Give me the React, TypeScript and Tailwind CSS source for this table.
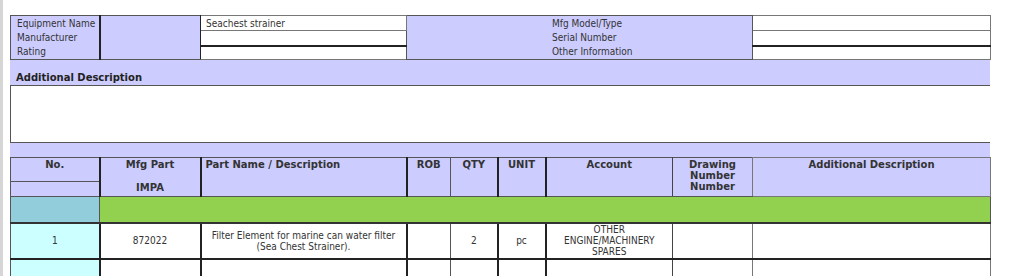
import React from "react";

const lav = "bg-[#ccccff]";
const regular = "font-['DejaVu_Sans_Condensed','DejaVu_Sans',sans-serif] text-[10px]";
const bold = "font-['DejaVu_Sans',sans-serif] text-[10px] font-bold";

const columns = [
  { key: "no", w: "w-[89px]" },
  { key: "mfg", w: "w-[101px]" },
  { key: "name", w: "w-[206px]" },
  { key: "rob", w: "w-[44px]" },
  { key: "qty", w: "w-[47px]" },
  { key: "unit", w: "w-[48px]" },
  { key: "account", w: "w-[127px]" },
  { key: "drawing", w: "w-[80px]" },
  { key: "desc", w: "w-[238px]" },
];

const EquipmentInfo = () => (
  <table className={`w-[980px] table-fixed border-collapse ${regular} leading-[14px] text-[#333]`}>
    <colgroup>
      <col className="w-[89px]" />
      <col className="w-[101px]" />
      <col className="w-[206px]" />
      <col className="w-[346px]" />
      <col className="w-[238px]" />
    </colgroup>
    <tbody>
      <tr className="h-[14px]">
        <td rowSpan={3} className={`${lav} border border-[#555] border-r-2 border-r-[#222] px-[6px] pt-[1px] align-top whitespace-nowrap`}>
          <div>Equipment Name</div>
          <div>Manufacturer</div>
          <div>Rating</div>
        </td>
        <td rowSpan={3} className={`${lav} border-y border-y-[#555] border-r border-r-[#222]`} />
        <td className="border border-[#777] bg-white px-[5px] leading-[13px]">Seachest strainer</td>
        <td rowSpan={3} className={`${lav} border border-[#555] pl-[145px] pt-[1px] align-top whitespace-nowrap`}>
          <div>Mfg Model/Type</div>
          <div>Serial Number</div>
          <div>Other Information</div>
        </td>
        <td className="border border-[#777] bg-white" />
      </tr>
      <tr className="h-[14px]">
        <td className="border border-[#777] border-b-2 border-b-[#222] bg-white" />
        <td className="border border-[#777] border-b-2 border-b-[#222] bg-white" />
      </tr>
      <tr className="h-[13px]">
        <td className="border border-[#777] bg-white" />
        <td className="border border-[#777] bg-white" />
      </tr>
    </tbody>
  </table>
);

const head = `${lav} text-center align-top pt-[1px]`;

const PartsHeader = () => (
  <table className={`w-[980px] table-fixed border-collapse ${bold} leading-[11px] text-[#333]`}>
    <colgroup>
      {columns.map((c) => (
        <col key={c.key} className={c.w} />
      ))}
    </colgroup>
    <tbody>
      <tr className="h-[24px]">
        <td className={`${head} border border-[#555]`}>No.</td>
        <td rowSpan={2} className={`${head} border-y border-y-[#555] border-x-2 border-x-[#222]`}>
          <div>Mfg Part</div>
          <div className="mt-[12px]">IMPA</div>
        </td>
        <td rowSpan={2} className={`${lav} border-y border-y-[#555] border-r-2 border-r-[#222] px-[4px] pt-[1px] align-top`}>
          Part Name / Description
        </td>
        <td rowSpan={2} className={`${head} border-y border-y-[#555] border-r border-r-[#555]`}>ROB</td>
        <td rowSpan={2} className={`${head} border-y border-y-[#555] border-r-2 border-r-[#222]`}>QTY</td>
        <td rowSpan={2} className={`${head} border-y border-y-[#555] border-r-2 border-r-[#222]`}>UNIT</td>
        <td rowSpan={2} className={`${head} border-y border-y-[#555] border-r border-r-[#444]`}>Account</td>
        <td rowSpan={2} className={`${head} border-y border-y-[#555] border-r border-r-[#777]`}>
          <div>Drawing</div>
          <div>Number</div>
          <div>Number</div>
        </td>
        <td rowSpan={2} className={`${head} border border-[#777]`}>Additional Description</td>
      </tr>
      <tr className="h-[15px]">
        <td className={`${lav} border border-[#555]`} />
      </tr>
      <tr className="h-[26px]">
        <td className="border border-[#555] border-b-2 border-b-[#333] bg-[#92cddc]" />
        <td colSpan={8} className="border border-[#555] border-b-2 border-b-[#333] bg-[#92d050]" />
      </tr>
    </tbody>
  </table>
);

const rows = [
  {
    no: "1",
    impa: "872022",
    name: ["Filter Element for marine can water filter", "(Sea Chest Strainer)."],
    qty: "2",
    unit: "pc",
    account: ["OTHER", "ENGINE/MACHINERY", "SPARES"],
  },
  { no: "", impa: "", name: [], qty: "", unit: "", account: [] },
];

const PartsRows = () => (
  <table className={`w-[980px] table-fixed border-collapse ${regular} leading-[11px] text-[#333]`}>
    <colgroup>
      {columns.map((c) => (
        <col key={c.key} className={c.w} />
      ))}
    </colgroup>
    <tbody>
      {rows.map((r, i) => (
        <tr key={i} className="h-[35px] border-b-2 border-b-[#222]">
          <td className="border-x border-[#555] bg-[#ccffff] text-center">{r.no}</td>
          <td className="border-x-2 border-[#222] bg-white text-center">{r.impa}</td>
          <td className="border-r-2 border-[#222] bg-white text-center">
            {r.name.map((l) => (
              <div key={l}>{l}</div>
            ))}
          </td>
          <td className="border-r border-[#555] bg-white" />
          <td className="border-r-2 border-[#222] bg-white text-center">{r.qty}</td>
          <td className="border-r-2 border-[#222] bg-white text-center">{r.unit}</td>
          <td className="border-r border-[#444] bg-white text-center">
            {r.account.map((l) => (
              <div key={l}>{l}</div>
            ))}
          </td>
          <td className="border-r border-[#777] bg-white" />
          <td className="border-r border-[#777] bg-white" />
        </tr>
      ))}
    </tbody>
  </table>
);

export default function App() {
  return (
    <div className="flex h-[276px] w-[1024px] overflow-hidden bg-white">
      <div className="w-[3px] shrink-0 bg-[#d6d6d6]" />
      <div className="ml-[7px] pt-[15px]">
        <EquipmentInfo />
        <div className={`${lav} flex h-[26px] w-[980px] items-end border-b border-[#555] pl-[6px] ${bold} text-[#222]`}>
          Additional Description
        </div>
        <div className="h-[57px] w-[980px] border-l border-b border-[#555] bg-white" />
        <div className={`${lav} h-[14px] w-[980px]`} />
        <PartsHeader />
        <PartsRows />
      </div>
    </div>
  );
}
